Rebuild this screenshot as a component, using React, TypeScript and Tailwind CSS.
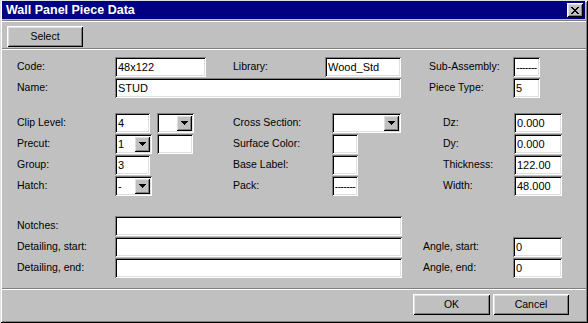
import React from 'react'

const raised =
  'shadow-[inset_1px_1px_0_#fff,inset_-1px_-1px_0_#000,inset_2px_2px_0_#dfdfdf,inset_-2px_-2px_0_#808080]'
const sunken =
  'shadow-[inset_1px_1px_0_#808080,inset_-1px_-1px_0_#fff,inset_2px_2px_0_#000,inset_-2px_-2px_0_#dfdfdf]'

function Label({ text, className }: { text: string; className: string }) {
  return (
    <div className={`shrink-0 text-[10.5px] text-black whitespace-nowrap ${className}`}>{text}</div>
  )
}

function Field({ value = '', className, dashes }: { value?: string; className: string; dashes?: boolean }) {
  return (
    <div
      className={`shrink-0 h-[20px] bg-white ${sunken} flex items-center overflow-hidden whitespace-nowrap text-black ${
        dashes ? 'justify-center text-[10px] tracking-[-0.4px] pt-[1px]' : 'pl-[3px] text-[11px]'
      } ${className}`}
    >
      {value}
    </div>
  )
}

function Combo({ value = '', className }: { value?: string; className: string }) {
  return (
    <div className={`shrink-0 h-[20px] bg-white ${sunken} flex items-center pl-[3px] text-[11px] text-black ${className}`}>
      <span className="flex-1">{value}</span>
      <div className={`w-[16px] h-[16px] mr-[2px] bg-[#c0c0c0] ${raised} flex items-center justify-center`}>
        <svg width="7" height="4" viewBox="0 0 7 4" shapeRendering="crispEdges">
          <rect x="0" y="0" width="7" height="1" fill="#000" />
          <rect x="1" y="1" width="5" height="1" fill="#000" />
          <rect x="2" y="2" width="3" height="1" fill="#000" />
          <rect x="3" y="3" width="1" height="1" fill="#000" />
        </svg>
      </div>
    </div>
  )
}

function Button({ text, className }: { text: string; className: string }) {
  return (
    <div
      className={`h-[21px] bg-[#c0c0c0] ${raised} flex items-center justify-center text-[10.5px] text-black ${className}`}
    >
      {text}
    </div>
  )
}

function CloseGlyph() {
  const rows = ['XX....XX', '.XX..XX.', '..XXXX..', '...XX...', '..XXXX..', '.XX..XX.', 'XX....XX']
  return (
    <svg width="8" height="7" viewBox="0 0 8 7" shapeRendering="crispEdges">
      {rows.map((r, y) =>
        r.split('').map((c, x) => (c === 'X' ? <rect key={`${x}-${y}`} x={x} y={y} width="1" height="1" fill="#000" /> : null))
      )}
    </svg>
  )
}

export default function App() {
  return (
    <div
      className={`w-[588px] h-[323px] bg-[#c0c0c0] flex flex-col font-['Liberation_Sans',Arial,sans-serif] shadow-[inset_1px_1px_0_#dfdfdf,inset_-1px_-1px_0_#000,inset_2px_2px_0_#fff,inset_-2px_-2px_0_#808080]`}
    >
      {/* title bar */}
      <div className="mt-[1px] ml-[2px] mr-[3px] h-[18px] bg-[#000080] flex items-center pl-[4px] pr-[2px]">
        <span className="text-white font-bold text-[12.5px] leading-none">Wall Panel Piece Data</span>
        <div className={`ml-auto w-[16px] h-[14px] bg-[#c0c0c0] ${raised} flex items-center justify-center`}>
          <CloseGlyph />
        </div>
      </div>

      <div className="mt-[1px] mx-[2px] h-[1px] bg-[#808080]" />
      <div className="mx-[2px] h-[1px] bg-white" />

      {/* toolbar */}
      <div className="mt-[4px] pl-[7px] flex">
        <Button text="Select" className="w-[76px] h-[20px]" />
      </div>

      <div className="mt-[1px] mx-[2px] h-[1px] bg-[#808080]" />
      <div className="mx-[2px] h-[1px] bg-white" />

      {/* identity */}
      <div className="mt-[7px] pl-[17px] flex flex-col gap-[1px]">
        <div className="flex items-center h-[20px]">
          <Label text="Code:" className="w-[98px]" />
          <Field value="48x122" className="w-[91px]" />
          <Label text="Library:" className="ml-[27px] w-[92px]" />
          <Field value="Wood_Std" className="w-[76px]" />
          <Label text="Sub-Assembly:" className="ml-[28px] w-[84px]" />
          <Field value="-------" dashes className="w-[27px]" />
        </div>
        <div className="flex items-center h-[20px]">
          <Label text="Name:" className="w-[98px]" />
          <Field value="STUD" className="w-[286px]" />
          <Label text="Piece Type:" className="ml-[28px] w-[84px]" />
          <Field value="5" className="w-[27px]" />
        </div>
      </div>

      {/* properties */}
      <div className="mt-[15px] pl-[17px] flex flex-col gap-[1px]">
        <div className="flex items-center h-[20px]">
          <Label text="Clip Level:" className="w-[98px]" />
          <Field value="4" className="w-[35px]" />
          <Combo className="ml-[7px] w-[37px]" />
          <Label text="Cross Section:" className="ml-[39px] w-[99px]" />
          <Combo className="w-[69px]" />
          <Label text="Dz:" className="ml-[42px] w-[71px]" />
          <Field value="0.000" className="w-[48px]" />
        </div>
        <div className="flex items-center h-[20px]">
          <Label text="Precut:" className="w-[98px]" />
          <Combo value="1" className="w-[37px]" />
          <Field className="ml-[5px] w-[36px]" />
          <Label text="Surface Color:" className="ml-[40px] w-[99px]" />
          <Field className="w-[26px]" />
          <Label text="Dy:" className="ml-[85px] w-[71px]" />
          <Field value="0.000" className="w-[48px]" />
        </div>
        <div className="flex items-center h-[20px]">
          <Label text="Group:" className="w-[98px]" />
          <Field value="3" className="w-[35px]" />
          <Label text="Base Label:" className="ml-[83px] w-[99px]" />
          <Field className="w-[26px]" />
          <Label text="Thickness:" className="ml-[85px] w-[71px]" />
          <Field value="122.00" className="w-[48px]" />
        </div>
        <div className="flex items-center h-[20px]">
          <Label text="Hatch:" className="w-[98px]" />
          <Combo value="-" className="w-[37px]" />
          <Label text="Pack:" className="ml-[81px] w-[99px]" />
          <Field value="-------" dashes className="w-[26px]" />
          <Label text="Width:" className="ml-[85px] w-[71px]" />
          <Field value="48.000" className="w-[48px]" />
        </div>
      </div>

      {/* detailing */}
      <div className="mt-[20px] pl-[17px] flex flex-col gap-[1px]">
        <div className="flex items-center h-[20px]">
          <Label text="Notches:" className="w-[98px]" />
          <Field className="w-[287px]" />
        </div>
        <div className="flex items-center h-[20px]">
          <Label text="Detailing, start:" className="w-[98px]" />
          <Field className="w-[287px]" />
          <Label text="Angle, start:" className="ml-[21px] w-[90px]" />
          <Field value="0" className="w-[49px]" />
        </div>
        <div className="flex items-center h-[20px]">
          <Label text="Detailing, end:" className="w-[98px]" />
          <Field className="w-[287px]" />
          <Label text="Angle, end:" className="ml-[21px] w-[90px]" />
          <Field value="0" className="w-[49px]" />
        </div>
      </div>

      <div className="mt-[10px] mx-[2px] h-[1px] bg-[#808080]" />
      <div className="mx-[2px] h-[1px] bg-white" />

      {/* footer */}
      <div className="mt-[4px] pr-[19px] flex justify-end gap-[3px]">
        <Button text="OK" className="w-[77px]" />
        <Button text="Cancel" className="w-[76px]" />
      </div>
    </div>
  )
}
